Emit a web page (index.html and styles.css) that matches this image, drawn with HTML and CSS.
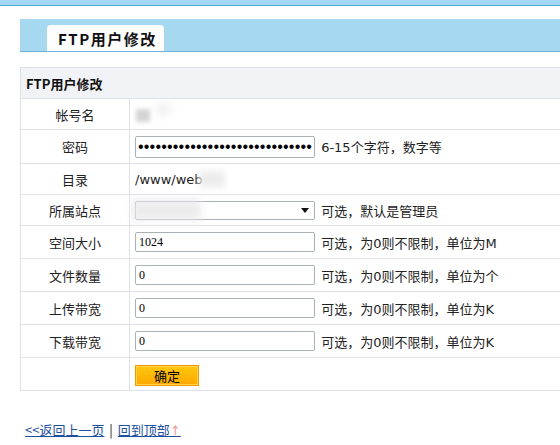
FILE: index.html
```html
<!DOCTYPE html>
<html lang="zh-CN">
<head>
    <meta charset="UTF-8">
    <title>FTP用户修改</title>
    <link rel="stylesheet" href="styles.css">
</head>
<body>
    <div class="topbar" id="top"></div>

    <div class="tabbar">
        <div class="tab">FTP用户修改</div>
    </div>

    <div class="main">
        <table class="form-table">
            <tr class="head">
                <th colspan="2">FTP用户修改</th>
            </tr>
            <tr>
                <td class="label">帐号名</td>
                <td><span class="mask mask-user"></span></td>
            </tr>
            <tr class="tall">
                <td class="label">密码</td>
                <td>
                    <input type="password" class="field pwd" value="12345678901234567890123456789012">
                    <span class="tip">6-15个字符，数字等</span>
                </td>
            </tr>
            <tr>
                <td class="label">目录</td>
                <td><span class="path">/www/web</span><span class="mask mask-path"></span></td>
            </tr>
            <tr>
                <td class="label">所属站点</td>
                <td>
                    <span class="select-wrap">
                        <select class="field site"><option></option></select>
                        <span class="mask mask-site"></span>
                    </span>
                    <span class="tip">可选，默认是管理员</span>
                </td>
            </tr>
            <tr class="mid">
                <td class="label">空间大小</td>
                <td><input type="text" class="field" value="1024"> <span class="tip">可选，为0则不限制，单位为M</span></td>
            </tr>
            <tr class="mid">
                <td class="label">文件数量</td>
                <td><input type="text" class="field" value="0"> <span class="tip">可选，为0则不限制，单位为个</span></td>
            </tr>
            <tr class="mid">
                <td class="label">上传带宽</td>
                <td><input type="text" class="field" value="0"> <span class="tip">可选，为0则不限制，单位为K</span></td>
            </tr>
            <tr class="mid">
                <td class="label">下载带宽</td>
                <td><input type="text" class="field" value="0"> <span class="tip">可选，为0则不限制，单位为K</span></td>
            </tr>
            <tr class="mid">
                <td class="label"></td>
                <td><button class="btn-ok">确定</button></td>
            </tr>
        </table>

        <div class="links">
            <a href="#">&lt;&lt;返回上一页</a>
            <span class="sep">|</span>
            <a href="#top">回到顶部<span class="up">↑</span></a>
        </div>
    </div>
</body>
</html>
```

FILE: styles.css
```css
html, body {
    margin: 0;
    overflow: hidden;
}
body {
    font-family: "DejaVu Sans", "Noto Sans CJK SC", sans-serif;
    font-size: 13px;
    color: #222;
    background: #fff;
}

/* top strip + tab bar */
.topbar {
    height: 5px;
    background: #a6d8f6;
    border-bottom: 1px solid #4fa7d6;
}
.tabbar {
    margin: 13px 0 0 20px;
    height: 32px;
    background: #a6d9ef;
    border-bottom: 1px solid #6cb2da;
    display: flex;
    align-items: flex-end;
    padding-left: 27px;
}
.tab {
    width: 106px;
    height: 26px;
    line-height: 27px;
    padding-left: 11px;
    background: #fff;
    border-radius: 4px 4px 0 0;
    font-family: "Noto Sans CJK SC", sans-serif;
    font-size: 15px;
    font-weight: bold;
    letter-spacing: 1.5px;
    color: #111;
}

/* form table */
.main {
    padding-left: 20px;
    overflow: hidden;
}
.form-table {
    width: 620px;
    margin-top: 15px;
    border-collapse: collapse;
}
.form-table th,
.form-table td {
    border: 1px solid #dfe1e9;
    height: 30px;
    padding: 0 5px;
}
.form-table th {
    background: #f2f3f6;
    text-align: left;
    font-family: "Noto Sans CJK SC", sans-serif;
    font-size: 13px;
    font-weight: bold;
    color: #111;
}
.form-table tr.tall td { height: 33px; }
.form-table tr.mid td { height: 32px; }
.form-table td.label {
    width: 98px;
    text-align: center;
    font-family: "Noto Sans CJK SC", sans-serif;
    color: #222;
}

.field {
    box-sizing: border-box;
    width: 180px;
    height: 20px;
    margin: 0;
    padding: 0 3px;
    border: 1px solid #a9b0b8;
    border-radius: 2px;
    font-family: "Liberation Serif", serif;
    font-size: 12px;
    color: #000;
    vertical-align: middle;
}
.pwd {
    height: 22px;
    padding: 0 2px;
    font-family: "Liberation Sans", sans-serif;
    font-size: 16px;
    letter-spacing: 0.2px;
}
.tip {
    margin-left: 2px;
    vertical-align: middle;
}
.path {
    vertical-align: middle;
}

/* select with its own arrow */
.select-wrap {
    position: relative;
    display: inline-block;
    vertical-align: middle;
}
.site {
    appearance: none;
    -webkit-appearance: none;
    height: 19px;
    background: #fff;
    display: block;
}
.select-wrap::after {
    content: "";
    position: absolute;
    right: 6px;
    top: 7px;
    border-left: 4px solid transparent;
    border-right: 4px solid transparent;
    border-top: 5px solid #111;
}

/* blurred placeholders for hidden values */
.mask {
    display: inline-block;
    vertical-align: middle;
    background: #d4d4d4;
    filter: blur(2px);
}
.mask-user {
    width: 14px;
    height: 13px;
    margin-left: 1px;
    box-shadow: 20px -6px 10px #f0f0f0;
}
.mask-path {
    width: 26px;
    height: 16px;
    background: #ececec;
    filter: blur(3px);
    margin-left: -4px;
}
.mask-site {
    position: absolute;
    left: -4px;
    top: -2px;
    width: 70px;
    height: 22px;
    background: #e8e8e8;
    filter: blur(4px);
    opacity: 0.8;
}

.btn-ok {
    width: 64px;
    height: 21px;
    margin: 2px 0 0;
    padding: 0;
    border: 1px solid #f29a00;
    box-shadow: inset 0 0 0 1px #ffd24a;
    background: linear-gradient(#ffc70d, #ffa800);
    font-family: "Noto Sans CJK SC", sans-serif;
    font-size: 13px;
    color: #000;
    cursor: pointer;
}

/* footer links */
.links {
    margin-top: 29px;
    padding-left: 5px;
    font-family: "Noto Sans CJK SC", sans-serif;
    font-size: 13px;
}
.links a {
    color: #1d4f9f;
}
.links .sep {
    color: #111;
    margin: 0 2px;
}
.links .up {
    font-size: 11px;
    font-weight: bold;
    color: #e8a0a0;
}
```
